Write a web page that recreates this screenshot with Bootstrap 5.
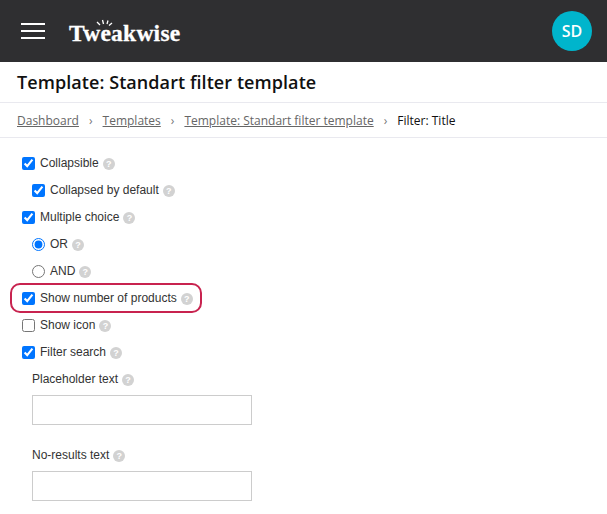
<!DOCTYPE html>
<html lang="en">
<head>
    <meta charset="UTF-8">
    <meta name="viewport" content="width=device-width, initial-scale=1.0">
    <title>Filter: Title</title>
    <link href="https://cdn.jsdelivr.net/npm/bootstrap@5.3.0/dist/css/bootstrap.min.css" rel="stylesheet">
    <style>
        body{
            overflow: hidden;
            background: #fff;
            font-family: "Liberation Sans", Arial, sans-serif;
            font-size: 12px;
            color: #333;
        }
        .top-bar{
            height: 62px;
            background: #2f2f31;
            padding: 0 15px 0 21px;
        }
        .burger{
            width: 24px;
            height: 16px;
            flex-direction: column;
            justify-content: space-between;
            margin-right: 24px;
        }
        .burger span{
            display: block;
            height: 2px;
            background: #fff;
        }
        .logo-wrap{
            position: relative;
            width: 114px;
            height: 30px;
            margin-top: 4px;
        }
        .logo-text{
            font-family: "Liberation Serif", serif;
            font-weight: 700;
            font-size: 23.5px;
            line-height: 30px;
            color: #fff;
            letter-spacing: .25px;
            -webkit-text-stroke: .3px #fff;
        }
        .logo-rays{
            position: absolute;
            left: 25px;
            top: 1px;
        }
        .avatar{
            width: 40px;
            height: 40px;
            border-radius: 50%;
            background: #00b5cc;
            color: #fff;
            font-family: "Open Sans", sans-serif;
            font-weight: 600;
            font-size: 16px;
        }
        .title-bar{
            height: 41px;
            padding: 1px 0 0 17px;
            border-bottom: 1px solid #e9e9ef;
            font-family: "Open Sans", sans-serif;
            font-weight: 600;
            font-size: 18px;
            letter-spacing: .07px;
            color: #111;
        }
        .crumbs{
            height: 35px;
            padding: 2px 0 0 17px;
            border-bottom: 1px solid #e9e9ef;
            font-family: "Open Sans", sans-serif;
            font-size: 12px;
            color: #111;
        }
        .crumbs a{
            color: #666;
        }
        .crumb-sep{
            color: #777;
            margin: 0 10px;
        }
        .filter-form{
            padding: 12px 0 0 22px;
        }
        .opt-row{
            height: 27px;
        }
        .opt-row input{
            width: 13px;
            height: 13px;
            margin: 0 5px 0 0;
        }
        .opt-label{
            margin-bottom: 2px;
        }
        .sub-row{
            padding-left: 10px;
        }
        .help-dot{
            width: 12px;
            height: 12px;
            border-radius: 50%;
            background: #d2d2d2;
            color: #fff;
            font-size: 9px;
            font-weight: 700;
            line-height: 1;
            margin-left: 4px;
            margin-top: 1px;
        }
        .marked-row{
            position: relative;
        }
        .marked-row::before{
            content: "";
            position: absolute;
            left: -12px;
            top: -2px;
            width: 192px;
            height: 30px;
            border: 2px solid #c8234f;
            border-radius: 10px;
        }
        .text-field{
            display: block;
            width: 220px;
            height: 30px;
            margin: 2px 0 17px 10px;
            border: 1px solid #ccc;
            background: #fff;
        }
    </style>
</head>
<body>
    <div class="top-bar d-flex align-items-center">
        <div class="burger d-flex"><span></span><span></span><span></span></div>
        <div class="logo-wrap">
            <svg class="logo-rays" width="20" height="10" viewBox="0 0 20 10">
                <path d="M3 3l3 3M8.500 1l1 4M14 1.500l-1 3.500M18 4l-3 2.500" stroke="#fff" stroke-width="1.300" fill="none"/>
            </svg>
            <div class="logo-text">Tweakwise</div>
        </div>
        <div class="avatar d-flex align-items-center justify-content-center ms-auto">SD</div>
    </div>

    <div class="title-bar d-flex align-items-center">Template: Standart filter template</div>

    <div class="crumbs d-flex align-items-center">
        <a href="#">Dashboard</a><span class="crumb-sep">›</span>
        <a href="#">Templates</a><span class="crumb-sep">›</span>
        <a href="#">Template: Standart filter template</a><span class="crumb-sep">›</span>
        <span>Filter: Title</span>
    </div>

    <form class="filter-form">
        <div class="opt-row d-flex align-items-center">
            <input type="checkbox" checked><span class="opt-label">Collapsible</span><span class="help-dot d-flex align-items-center justify-content-center">?</span>
        </div>
        <div class="opt-row sub-row d-flex align-items-center">
            <input type="checkbox" checked><span class="opt-label">Collapsed by default</span><span class="help-dot d-flex align-items-center justify-content-center">?</span>
        </div>
        <div class="opt-row d-flex align-items-center">
            <input type="checkbox" checked><span class="opt-label">Multiple choice</span><span class="help-dot d-flex align-items-center justify-content-center">?</span>
        </div>
        <div class="opt-row sub-row d-flex align-items-center">
            <input type="radio" name="logic" checked><span class="opt-label">OR</span><span class="help-dot d-flex align-items-center justify-content-center">?</span>
        </div>
        <div class="opt-row sub-row d-flex align-items-center">
            <input type="radio" name="logic"><span class="opt-label">AND</span><span class="help-dot d-flex align-items-center justify-content-center">?</span>
        </div>
        <div class="opt-row marked-row d-flex align-items-center">
            <input type="checkbox" checked><span class="opt-label">Show number of products</span><span class="help-dot d-flex align-items-center justify-content-center">?</span>
        </div>
        <div class="opt-row d-flex align-items-center">
            <input type="checkbox"><span class="opt-label">Show icon</span><span class="help-dot d-flex align-items-center justify-content-center">?</span>
        </div>
        <div class="opt-row d-flex align-items-center">
            <input type="checkbox" checked><span class="opt-label">Filter search</span><span class="help-dot d-flex align-items-center justify-content-center">?</span>
        </div>
        <div class="opt-row sub-row d-flex align-items-center">
            <span class="opt-label">Placeholder text</span><span class="help-dot d-flex align-items-center justify-content-center">?</span>
        </div>
        <input class="text-field" type="text">
        <div class="opt-row sub-row d-flex align-items-center">
            <span class="opt-label">No-results text</span><span class="help-dot d-flex align-items-center justify-content-center">?</span>
        </div>
        <input class="text-field" type="text">
    </form>

    <script src="https://cdn.jsdelivr.net/npm/bootstrap@5.3.0/dist/js/bootstrap.bundle.min.js"></script>
</body>
</html>
